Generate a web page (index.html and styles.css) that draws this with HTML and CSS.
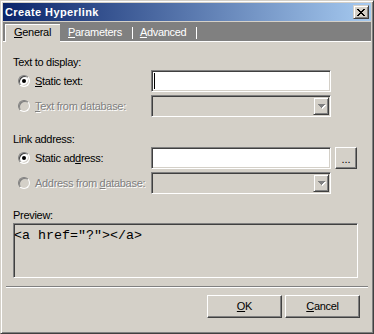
FILE: index.html
```html
<!DOCTYPE html>
<html>
<head>
<meta charset="utf-8">
<link rel="stylesheet" href="styles.css">
</head>
<body>
<div class="window">
  <div class="titlebar">
    <span class="title">Create Hyperlink</span>
    <div class="close">
      <svg width="8" height="7" viewBox="0 0 8 7" shape-rendering="crispEdges"><path d="M0 0h2v1h-2z M6 0h2v1h-2z M1 1h2v1h-2z M5 1h2v1h-2z M2 2h4v1h-4z M3 3h2v1h-2z M2 4h4v1h-4z M1 5h2v1h-2z M5 5h2v1h-2z M0 6h2v1h-2z M6 6h2v1h-2z" fill="#000"/></svg>
    </div>
  </div>
  <div class="tabs">
    <div class="tab active"><u>G</u>eneral</div>
    <div class="tab first"><u>P</u>arameters</div>
    <span class="tabsep"></span>
    <div class="tab"><u>A</u>dvanced</div>
    <span class="tabsep"></span>
  </div>
  <div class="page">
    <div class="group-label">Text to display:</div>
    <div class="row">
      <div class="opt"><span class="radio checked"></span><span class="opt-label"><u>S</u>tatic text:</span></div>
      <div class="field"><span class="caret"></span></div>
    </div>
    <div class="row">
      <div class="opt"><span class="radio disabled"></span><span class="opt-label dim"><u>T</u>ext from database:</span></div>
      <div class="field combo">
        <div class="drop"><svg width="8" height="5" viewBox="0 0 8 5" shape-rendering="crispEdges"><path d="M1 1h7v1h-1v1h-1v1h-1v1h-1v-1h-1v-1h-1v-1h-1z" fill="#fff"/><path d="M0 0h7v1h-1v1h-1v1h-1v1h-1v-1h-1v-1h-1v-1h-1z" fill="#808080"/></svg></div>
      </div>
    </div>

    <div class="group-label second">Link address:</div>
    <div class="row">
      <div class="opt"><span class="radio checked"></span><span class="opt-label">Static ad<u>d</u>ress:</span></div>
      <div class="field"></div>
      <div class="btn small">...</div>
    </div>
    <div class="row">
      <div class="opt"><span class="radio disabled"></span><span class="opt-label dim">Address from <u>d</u>atabase:</span></div>
      <div class="field combo">
        <div class="drop"><svg width="8" height="5" viewBox="0 0 8 5" shape-rendering="crispEdges"><path d="M1 1h7v1h-1v1h-1v1h-1v1h-1v-1h-1v-1h-1v-1h-1z" fill="#fff"/><path d="M0 0h7v1h-1v1h-1v1h-1v1h-1v-1h-1v-1h-1v-1h-1z" fill="#808080"/></svg></div>
      </div>
    </div>

    <div class="group-label third">Preview:</div>
    <div class="preview">&lt;a href="?"&gt;&lt;/a&gt;</div>
  </div>
  <div class="sep"></div>
  <div class="buttons">
    <div class="btn push"><u>O</u>K</div>
    <div class="btn push"><u>C</u>ancel</div>
  </div>
</div>
</body>
</html>
```

FILE: styles.css
```css
html, body {
  margin: 0;
  padding: 0;
  background: #d4d0c8;
}

.window {
  width: 374px;
  height: 334px;
  box-sizing: border-box;
  border: 1px solid;
  border-color: #d4d0c8 #404040 #404040 #d4d0c8;
  box-shadow: inset 1px 1px 0 #fff, inset -1px -1px 0 #808080;
  padding: 2px;
  background: #d4d0c8;
  font-family: "Liberation Sans", Arial, sans-serif;
  font-size: 11px;
  line-height: 13px;
  letter-spacing: -0.3px;
  color: #000;
  overflow: hidden;
}

u {
  text-decoration-thickness: 1px;
  text-underline-offset: 1px;
}

.titlebar {
  height: 18px;
  display: flex;
  align-items: center;
  background: linear-gradient(to right, #0a246a, #a6caf0);
  margin-bottom: 1px;
}

.title {
  padding-left: 2px;
  color: #fff;
  font-weight: bold;
  letter-spacing: 0.4px;
}

.close {
  margin-left: auto;
  margin-right: 2px;
  width: 16px;
  height: 14px;
  box-sizing: border-box;
  border: 1px solid;
  border-color: #d4d0c8 #404040 #404040 #d4d0c8;
  box-shadow: inset 1px 1px 0 #fff, inset -1px -1px 0 #808080;
  background: #d4d0c8;
  display: flex;
  align-items: center;
  justify-content: center;
  padding-right: 1px;
}

.close svg {
  display: block;
}

.tabs {
  height: 20px;
  background: #808080;
  box-shadow: inset 0 -1px 0 #fff;
  display: flex;
  align-items: flex-end;
  padding-left: 2px;
}

.tab {
  height: 18px;
  box-sizing: border-box;
  padding-top: 2px;
  color: #fff;
  white-space: nowrap;
}

.tab.first {
  padding-left: 8px;
}

.tab.active {
  width: 55px;
  background: #d4d0c8;
  color: #000;
  border-top: 1px solid #fff;
  border-left: 1px solid #fff;
  padding-top: 1px;
  padding-left: 8px;
}

.tab + .tabsep + .tab {
  padding-left: 7px;
}

.tabsep {
  width: 1px;
  height: 12px;
  background: #fff;
  margin-left: 10px;
  margin-bottom: 3px;
}

.page {
  padding: 14px 0 0 10px;
}

.group-label {
  margin-bottom: 1px;
}

.group-label.second {
  margin-top: 16px;
}

.group-label.third {
  margin-top: 15px;
}

.row {
  display: flex;
  align-items: center;
  height: 22px;
}

.row + .row {
  margin-top: 3px;
}

.opt {
  width: 138px;
  display: flex;
  align-items: center;
  flex: none;
}

.radio {
  flex: none;
  width: 12px;
  height: 12px;
  margin-left: 5px;
  box-sizing: border-box;
  border-radius: 50%;
  border: 1px solid;
  border-color: #808080 #fff #fff #808080;
  box-shadow: inset 1px 1px 0 #404040, inset -1px -1px 0 #d4d0c8;
  background: #fff;
  display: flex;
  align-items: center;
  justify-content: center;
}

.radio.checked::after {
  content: "";
  width: 4px;
  height: 4px;
  border-radius: 50%;
  background: #000;
}

.radio.disabled {
  background: #d4d0c8;
  box-shadow: inset 1px 1px 0 #808080, inset -1px -1px 0 #d4d0c8;
}

.opt-label {
  margin-left: 5px;
  white-space: nowrap;
}

.opt-label.dim {
  color: #808080;
  text-shadow: 1px 1px 0 #fff;
}

.field {
  width: 180px;
  height: 22px;
  box-sizing: border-box;
  border: 1px solid;
  border-color: #808080 #fff #fff #808080;
  box-shadow: inset 1px 1px 0 #404040, inset -1px -1px 0 #d4d0c8;
  background: #fff;
  display: flex;
  align-items: center;
  flex: none;
}

.caret {
  width: 1px;
  height: 16px;
  background: #000;
  margin-left: 2px;
}

.field.combo {
  background: #d4d0c8;
  justify-content: flex-end;
}

.drop {
  width: 16px;
  height: 18px;
  margin-right: 1px;
  box-sizing: border-box;
  border: 1px solid;
  border-color: #d4d0c8 #404040 #404040 #d4d0c8;
  box-shadow: inset 1px 1px 0 #fff, inset -1px -1px 0 #808080;
  background: #d4d0c8;
  display: flex;
  align-items: center;
  justify-content: center;
  padding-left: 1px;
}

.drop svg {
  display: block;
}

.btn {
  box-sizing: border-box;
  border: 1px solid;
  border-color: #fff #404040 #404040 #fff;
  box-shadow: inset -1px -1px 0 #808080;
  background: #d4d0c8;
  display: flex;
  align-items: center;
  justify-content: center;
  flex: none;
}

.btn.small {
  width: 22px;
  height: 22px;
  margin-left: 4px;
  letter-spacing: 0;
  padding-top: 2px;
}

.preview {
  width: 345px;
  height: 55px;
  box-sizing: border-box;
  border: 1px solid;
  border-color: #808080 #fff #fff #808080;
  box-shadow: inset 1px 1px 0 #404040, inset -1px -1px 0 #d4d0c8;
  background: #d4d0c8;
  font-family: "Liberation Mono", "Courier New", monospace;
  font-size: 13.33px;
  line-height: 15px;
  letter-spacing: 0;
  padding: 4px 0 0 0;
  white-space: pre;
}

.sep {
  margin: 8px 3px 0;
  height: 2px;
  box-sizing: border-box;
  border-top: 1px solid #808080;
  border-bottom: 1px solid #fff;
}

.buttons {
  display: flex;
  justify-content: flex-end;
  gap: 3px;
  margin-top: 7px;
  padding-right: 11px;
}

.btn.push {
  width: 75px;
  height: 23px;
}
```
